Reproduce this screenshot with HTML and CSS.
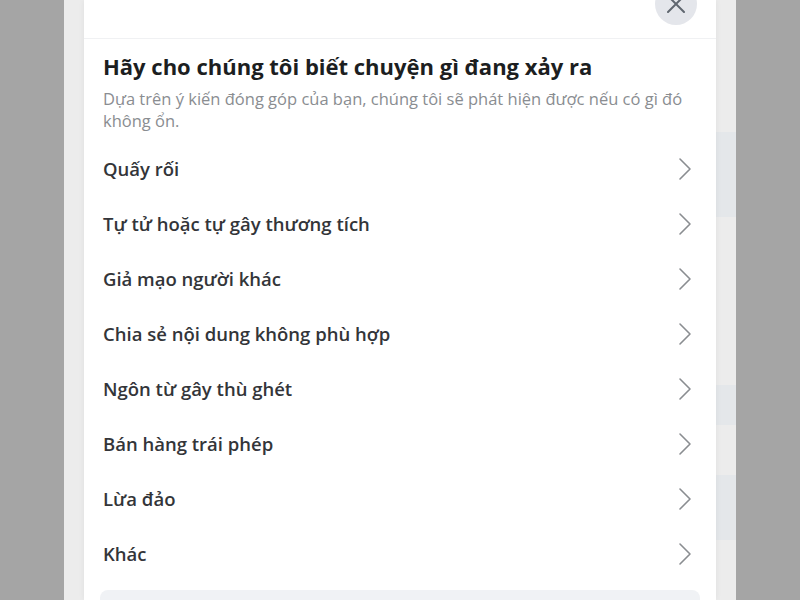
FILE: index.html
```html
<!DOCTYPE html>
<html lang="vi">
  <head>
    <meta charset="UTF-8">
    <title>Báo cáo</title>
    <link rel="stylesheet" href="styles.css">
  </head>
  <body>
    <div class="page">
      <div class="backdrop-patch patch-1"></div>
      <div class="backdrop-patch patch-2"></div>
      <div class="backdrop-patch patch-3"></div>
      <div class="modal">
        <div class="modal-header">
          <button class="close" aria-label="Đóng">
            <svg width="18" height="18" viewBox="0 0 18 18"><path d="M1 1 L17 17 M17 1 L1 17" stroke="#606770" stroke-width="2" stroke-linecap="round"/></svg>
          </button>
        </div>
        <div class="modal-body">
          <h2 class="title">Hãy cho chúng tôi biết chuyện gì đang xảy ra</h2>
          <p class="description">Dựa trên ý kiến đóng góp của bạn, chúng tôi sẽ phát hiện được nếu có gì đó không ổn.</p>
          <ul class="options">
            <li>Quấy rối<svg class="chevron" width="14" height="24" viewBox="0 0 14 24"><path d="M2 2 L12 12 L2 22" fill="none" stroke="#8a8d91" stroke-width="1.6" stroke-linecap="round" stroke-linejoin="round"/></svg></li>
            <li>Tự tử hoặc tự gây thương tích<svg class="chevron" width="14" height="24" viewBox="0 0 14 24"><path d="M2 2 L12 12 L2 22" fill="none" stroke="#8a8d91" stroke-width="1.6" stroke-linecap="round" stroke-linejoin="round"/></svg></li>
            <li>Giả mạo người khác<svg class="chevron" width="14" height="24" viewBox="0 0 14 24"><path d="M2 2 L12 12 L2 22" fill="none" stroke="#8a8d91" stroke-width="1.6" stroke-linecap="round" stroke-linejoin="round"/></svg></li>
            <li>Chia sẻ nội dung không phù hợp<svg class="chevron" width="14" height="24" viewBox="0 0 14 24"><path d="M2 2 L12 12 L2 22" fill="none" stroke="#8a8d91" stroke-width="1.6" stroke-linecap="round" stroke-linejoin="round"/></svg></li>
            <li>Ngôn từ gây thù ghét<svg class="chevron" width="14" height="24" viewBox="0 0 14 24"><path d="M2 2 L12 12 L2 22" fill="none" stroke="#8a8d91" stroke-width="1.6" stroke-linecap="round" stroke-linejoin="round"/></svg></li>
            <li>Bán hàng trái phép<svg class="chevron" width="14" height="24" viewBox="0 0 14 24"><path d="M2 2 L12 12 L2 22" fill="none" stroke="#8a8d91" stroke-width="1.6" stroke-linecap="round" stroke-linejoin="round"/></svg></li>
            <li>Lừa đảo<svg class="chevron" width="14" height="24" viewBox="0 0 14 24"><path d="M2 2 L12 12 L2 22" fill="none" stroke="#8a8d91" stroke-width="1.6" stroke-linecap="round" stroke-linejoin="round"/></svg></li>
            <li>Khác<svg class="chevron" width="14" height="24" viewBox="0 0 14 24"><path d="M2 2 L12 12 L2 22" fill="none" stroke="#8a8d91" stroke-width="1.6" stroke-linecap="round" stroke-linejoin="round"/></svg></li>
          </ul>
          <div class="notice"></div>
        </div>
      </div>
    </div>
  </body>
</html>
```

FILE: styles.css
```css
html, body {
  margin: 0;
  height: 100%;
  overflow: hidden;
}
body {
  background: #a5a5a5;
  font-family: "Open Sans", "Noto Sans", sans-serif;
  display: flex;
  justify-content: center;
}
.page {
  position: relative;
  width: 632px;
  height: 600px;
  padding: 0 20px;
  background: #ececec;
}
.backdrop-patch {
  position: absolute;
  right: 0;
  width: 20px;
  background: #e4e7ea;
}
.patch-1 { top: 132px; height: 85px; }
.patch-2 { top: 385px; height: 40px; }
.patch-3 { top: 475px; height: 65px; }
.modal {
  position: relative;
  height: 100%;
  background: #fff;
  box-shadow: 0 0 6px rgba(0, 0, 0, 0.06);
}
.modal-header {
  position: relative;
  height: 38px;
  border-bottom: 1px solid #f0f1f3;
}
.close {
  position: absolute;
  top: -17px;
  right: 19px;
  width: 42px;
  height: 42px;
  border: none;
  border-radius: 50%;
  background: #e4e6eb;
  display: flex;
  align-items: center;
  justify-content: center;
  padding: 0;
}
.modal-body {
  padding: 0 19px;
}
.title {
  margin: 13px 0 0;
  font-size: 22px;
  line-height: 28px;
  font-weight: 700;
  color: #1c1e21;
}
.description {
  margin: 8px 0 0;
  font-size: 16.5px;
  line-height: 22px;
  color: #8a8d91;
}
.options {
  list-style: none;
  margin: 9px 0 0;
  padding: 0;
}
.options li {
  height: 55px;
  display: flex;
  align-items: center;
  justify-content: space-between;
  font-size: 18.5px;
  font-weight: 600;
  color: #333539;
}
.chevron {
  margin-right: 5px;
}
.notice {
  margin: 9px -3px 0;
  height: 40px;
  border-radius: 8px;
  background: #f0f2f5;
}
```
